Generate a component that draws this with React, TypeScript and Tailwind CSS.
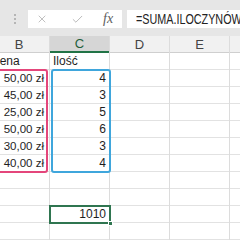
import React from 'react';
import { X, Check } from 'lucide-react';

type CellProps = {
    text?: string;
    align?: 'left' | 'right';
    pad?: string;
    size?: string;
};

/** One grid cell of the sheet, 17px high with Excel-like gridlines. */
const Cell: React.FC<CellProps> = ({ text, align = 'left', pad = 'px-[3px]', size = 'text-[12px]' }) => (
    <div
        className={`h-[17px] flex items-end ${pad} border-b border-[#e2e2e2] ${size} leading-[15px] text-[#1e1e1e] whitespace-nowrap overflow-hidden ${align === 'right' ? 'justify-end' : 'justify-start'}`}
    >
        {text}
    </div>
);

const Blank: React.FC<{ count: number }> = ({ count }) => (
    <>
        {Array.from({ length: count }).map((_, i) => (
            <Cell key={i} />
        ))}
    </>
);

const HeaderCell: React.FC<{ letter: string; active?: boolean }> = ({ letter, active }) => (
    <div
        className={`h-[17px] flex items-center justify-center text-[13px] leading-none ${
            active
                ? 'bg-[#d6d6d6] border-b-2 border-b-[#217346] text-[#1f5f3c]'
                : 'bg-[#f1f1f1] border-b border-b-[#cfcfcf] text-[#444]'
        }`}
    >
        {letter}
    </div>
);

const prices = ['50,00 zł', '45,00 zł', '25,00 zł', '50,00 zł', '30,00 zł', '40,00 zł'];
const amounts = ['4', '3', '5', '6', '3', '4'];

export default function App() {
    return (
        <div
            className="w-[240px] h-[240px] overflow-hidden bg-white flex flex-col"
            style={{ fontFamily: '"Liberation Sans", Arial, sans-serif' }}
        >
            {/* formula bar */}
            <div className="h-[36px] shrink-0 bg-[#e6e6e6] flex items-start pt-[10px]">
                <div className="w-[28px] h-[18px] flex flex-col items-center justify-center gap-[2px] pl-[1px]">
                    <span className="w-[2px] h-[2px] bg-[#b5b5b5]" />
                    <span className="w-[2px] h-[2px] bg-[#b5b5b5]" />
                    <span className="w-[2px] h-[2px] bg-[#b5b5b5]" />
                </div>
                <div className="w-[94px] h-[18px] bg-white flex items-center">
                    <X size={12} strokeWidth={1.3} className="text-[#9d9d9d] ml-[8px]" />
                    <Check size={13} strokeWidth={1.3} className="text-[#9d9d9d] ml-[23px]" />
                    <span
                        className="ml-[19px] text-[14px] italic text-[#5e5e5e] leading-none"
                        style={{ fontFamily: '"Liberation Serif", "Times New Roman", serif' }}
                    >
                        fx
                    </span>
                </div>
                <div className="ml-[5px] flex-1 h-[18px] bg-white flex items-center overflow-hidden">
                    <span className="ml-[9px] inline-block origin-left scale-x-[0.77] text-[14px] leading-none text-[#222] whitespace-nowrap">
                        =SUMA.ILOCZYNÓW
                    </span>
                </div>
            </div>

            {/* sheet */}
            <div className="flex flex-1 -ml-[11px]">
                {/* column B */}
                <div className="w-[61px] shrink-0 flex flex-col border-r border-[#dcdcdc]">
                    <HeaderCell letter="B" />
                    <Cell text="Cena" pad="pl-[2px]" />
                    <div className="relative">
                        {prices.map((p, i) => (
                            <Cell key={i} text={p} align="right" pad="pr-[5px]" size="text-[11.5px]" />
                        ))}
                        <div className="absolute -top-px -bottom-px -left-[4px] right-[1px] border-2 border-[#e4467b] rounded-[3px] pointer-events-none" />
                    </div>
                    <Blank count={4} />
                </div>

                {/* column C */}
                <div className="w-[60px] shrink-0 flex flex-col border-r border-[#dcdcdc]">
                    <HeaderCell letter="C" active />
                    <Cell text="Ilość" />
                    <div className="relative">
                        {amounts.map((a, i) => (
                            <Cell key={i} text={a} align="right" />
                        ))}
                        <div className="absolute -top-px -bottom-px left-[1px] -right-[2px] border-2 border-[#3fa6dc] rounded-[3px] pointer-events-none" />
                    </div>
                    <Blank count={2} />
                    <div className="relative">
                        <Cell text="1010" align="right" />
                        <div className="absolute -top-px -bottom-px -left-px -right-[2px] border-2 border-[#2f7550] pointer-events-none" />
                        <div className="absolute -bottom-[3px] -right-[4px] w-[5px] h-[5px] bg-[#2f7550] border border-white" />
                    </div>
                    <Blank count={1} />
                </div>

                {/* columns D, E, F */}
                {['D', 'E', 'F'].map((l) => (
                    <div key={l} className="w-[60px] shrink-0 flex flex-col border-r border-[#dcdcdc]">
                        <HeaderCell letter={l} />
                        <Blank count={11} />
                    </div>
                ))}
            </div>
        </div>
    );
}
